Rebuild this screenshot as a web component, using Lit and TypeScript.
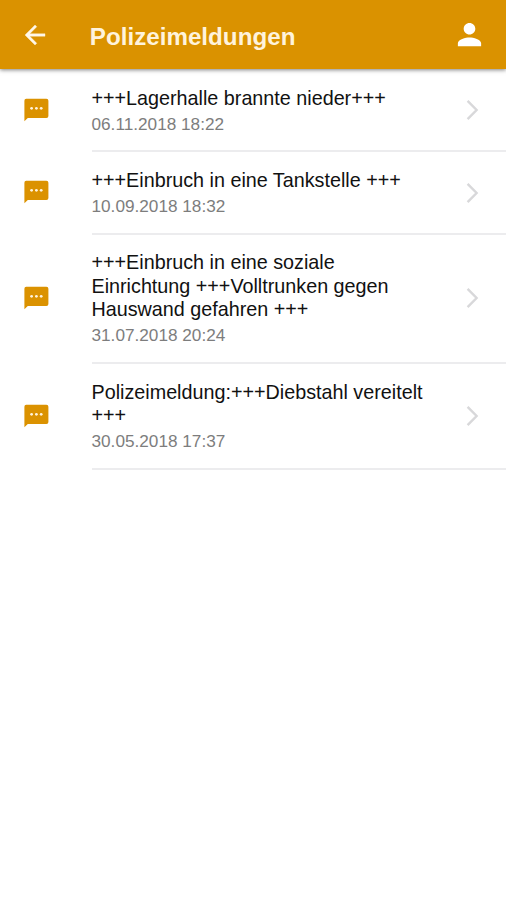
import { LitElement, html, css } from "lit";
import { customElement, property } from "lit/decorators.js";

interface Report {
  title: string;
  date: string;
}

const REPORTS: Report[] = [
  { title: "+++Lagerhalle brannte nieder+++", date: "06.11.2018 18:22" },
  { title: "+++Einbruch in eine Tankstelle +++", date: "10.09.2018 18:32" },
  { title: "+++Einbruch in eine soziale Einrichtung +++Volltrunken gegen Hauswand gefahren +++", date: "31.07.2018 20:24" },
  { title: "Polizeimeldung:+++Diebstahl vereitelt +++", date: "30.05.2018 17:37" },
];

@customElement("report-item")
export class ReportItem extends LitElement {
  @property() heading = "";
  @property() date = "";

  static styles = css`
    :host { display: flex; align-items: stretch; }
    .lead { flex: none; width: 91.5px; display: flex; align-items: center; }
    .chat { display: block; width: 25px; height: 24px; margin: -2.4px 0 0 23.7px; fill: #db9200; }
    .body {
      flex: 1; min-width: 0; display: flex; align-items: center;
      border-bottom: 2px solid #ececee;
      padding: 16.8px 24px 15.6px 0;
    }
    .text { flex: 1; min-width: 0; padding-right: 39px; }
    .title { font-size: 19.75px; line-height: 23.5px; color: #111; }
    .date { font-size: 17.2px; line-height: 21px; margin-top: 3.4px; color: #7d7d7d; }
    .chevron { flex: none; width: 16px; height: 22px; margin-top: -1px; fill: none; stroke: #d8d8da; stroke-width: 2.4; }
  `;

  render() {
    return html`
      <div class="lead">
        <svg class="chat" viewBox="0 0 25 24">
          <path d="M2.2.8H22.4Q24.4.8 24.4 2.8V18.1Q24.4 20.1 22.4 20.1H3.8L.4 23.3V2.8Q.4.8 2.2.8Z" />
          <g fill="#fff3dc">
            <circle cx="7.6" cy="10.3" r="1.4" />
            <circle cx="12.4" cy="10.3" r="1.4" />
            <circle cx="17.2" cy="10.3" r="1.4" />
          </g>
        </svg>
      </div>
      <div class="body">
        <div class="text">
          <div class="title">${this.heading}</div>
          <div class="date">${this.date}</div>
        </div>
        <svg class="chevron" viewBox="0 0 16 22"><path d="M1.6 1.9L10.6 11L1.6 20.1" /></svg>
      </div>
    `;
  }
}

@customElement("app-root")
export class AppRoot extends LitElement {
  static styles = css`
    :host {
      display: block; min-height: 900px; background: #fff;
      font-family: "Liberation Sans", Arial, Helvetica, sans-serif;
    }
    .bar {
      position: relative; box-sizing: border-box; height: 69px; padding: 0 21px 0 20px;
      display: flex; align-items: center; background: #da9200;
      box-shadow: 0 1px 4px rgba(0, 0, 0, 0.5);
    }
    .back { width: 30px; height: 30px; margin-top: 1px; fill: #fff7e8; stroke: #fff7e8; stroke-width: 0.3; stroke-linejoin: round; }
    .name { flex: 1; margin: 5px 0 0 39.8px; font-size: 24.2px; line-height: 30px; font-weight: 700; color: #fff3dc; }
    .person { width: 31px; height: 31px; fill: #fff; }
    .list { padding-top: 1.1px; }
  `;

  render() {
    return html`
      <header class="bar">
        <svg class="back" viewBox="0 0 24 24"><path d="M20 11H7.83l5.59-5.59L12 4l-8 8 8 8 1.41-1.41L7.83 13H20z" /></svg>
        <div class="name">Polizeimeldungen</div>
        <svg class="person" viewBox="0 0 512 512"><path d="M256 256c52.8 0 96-43.2 96-96s-43.2-96-96-96-96 43.2-96 96 43.2 96 96 96zm0 48c-63.6 0-192 32.4-192 96v48h384v-48c0-63.6-128.4-96-192-96z" /></svg>
      </header>
      <main class="list">
        ${REPORTS.map((r) => html`<report-item .heading=${r.title} .date=${r.date}></report-item>`)}
      </main>
    `;
  }
}
